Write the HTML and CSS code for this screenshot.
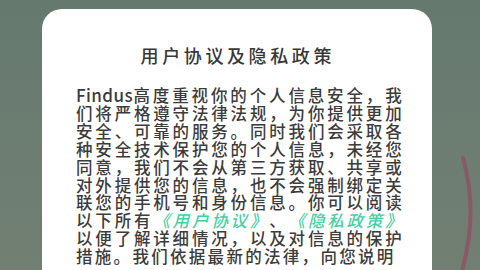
FILE: index.html
```html
<!DOCTYPE html>
<html lang="zh-CN">
<head>
<meta charset="utf-8">
<title>用户协议及隐私政策</title>
<link rel="stylesheet" href="styles.css">
</head>
<body>
<div class="screen">
  <section class="dialog">
    <h1 class="dialog-title">用户协议及隐私政策</h1>
    <p class="dialog-text"><span class="latin">Findus</span>高度重视你的个人信息安全，我们将严格遵守法律法规，为你提供更加安全、可靠的服务。同时我们会采取各种安全技术保护您的个人信息，未经您同意，我们不会从第三方获取、共享或对外提供您的信息，也不会强制绑定关联您的手机号和身份信息。你可以阅读以下所有<a class="link">《用户协议》</a>、<a class="link">《隐私政策》</a>以便了解详细情况，以及对信息的保护措施。我们依据最新的法律，向您说明</p>
  </section>
  <svg class="arc" width="48" height="270" viewBox="432 0 48 270" aria-hidden="true">
    <path d="M463 158 Q479 214 461 274" fill="none" stroke="#8a5866" stroke-width="4" stroke-linecap="round"/>
  </svg>
</div>
</body>
</html>
```
FILE: styles.css
```css
html, body {
  margin: 0;
  padding: 0;
}
body {
  width: 480px;
  height: 270px;
  overflow: hidden;
  background: linear-gradient(180deg, #65796e 0%, #6c7d72 50%, #727f73 100%);
  font-family: "Noto Sans CJK SC", "Noto Sans", sans-serif;
}
.screen {
  position: relative;
  height: 270px;
  padding: 9px 0 0 42px;
  box-sizing: border-box;
}
.dialog {
  width: 390px;
  height: 300px;
  background: #ffffff;
  border-radius: 20px;
  padding: 34px 28px 0 34px;
  box-sizing: border-box;
}
.dialog-title {
  margin: 0;
  text-align: center;
  font-size: 18px;
  font-weight: 500;
  line-height: 24px;
  letter-spacing: 3.6px;
  color: #383838;
  padding-left: 3.6px;
  padding-right: 8px;
}
.dialog-text {
  margin: 19px 0 0 0;
  font-size: 16.5px;
  font-weight: 500;
  line-height: 17.9px;
  letter-spacing: 2.3px;
  color: #3c3c3c;
  text-align: justify;
  text-spacing-trim: space-all;
}
.latin {
  letter-spacing: 0.4px;
  font-size: 17px;
}
.link {
  color: #45d0a4;
  font-style: italic;
  text-decoration: none;
}
.arc {
  position: absolute;
  right: 0;
  top: 0;
}
```
